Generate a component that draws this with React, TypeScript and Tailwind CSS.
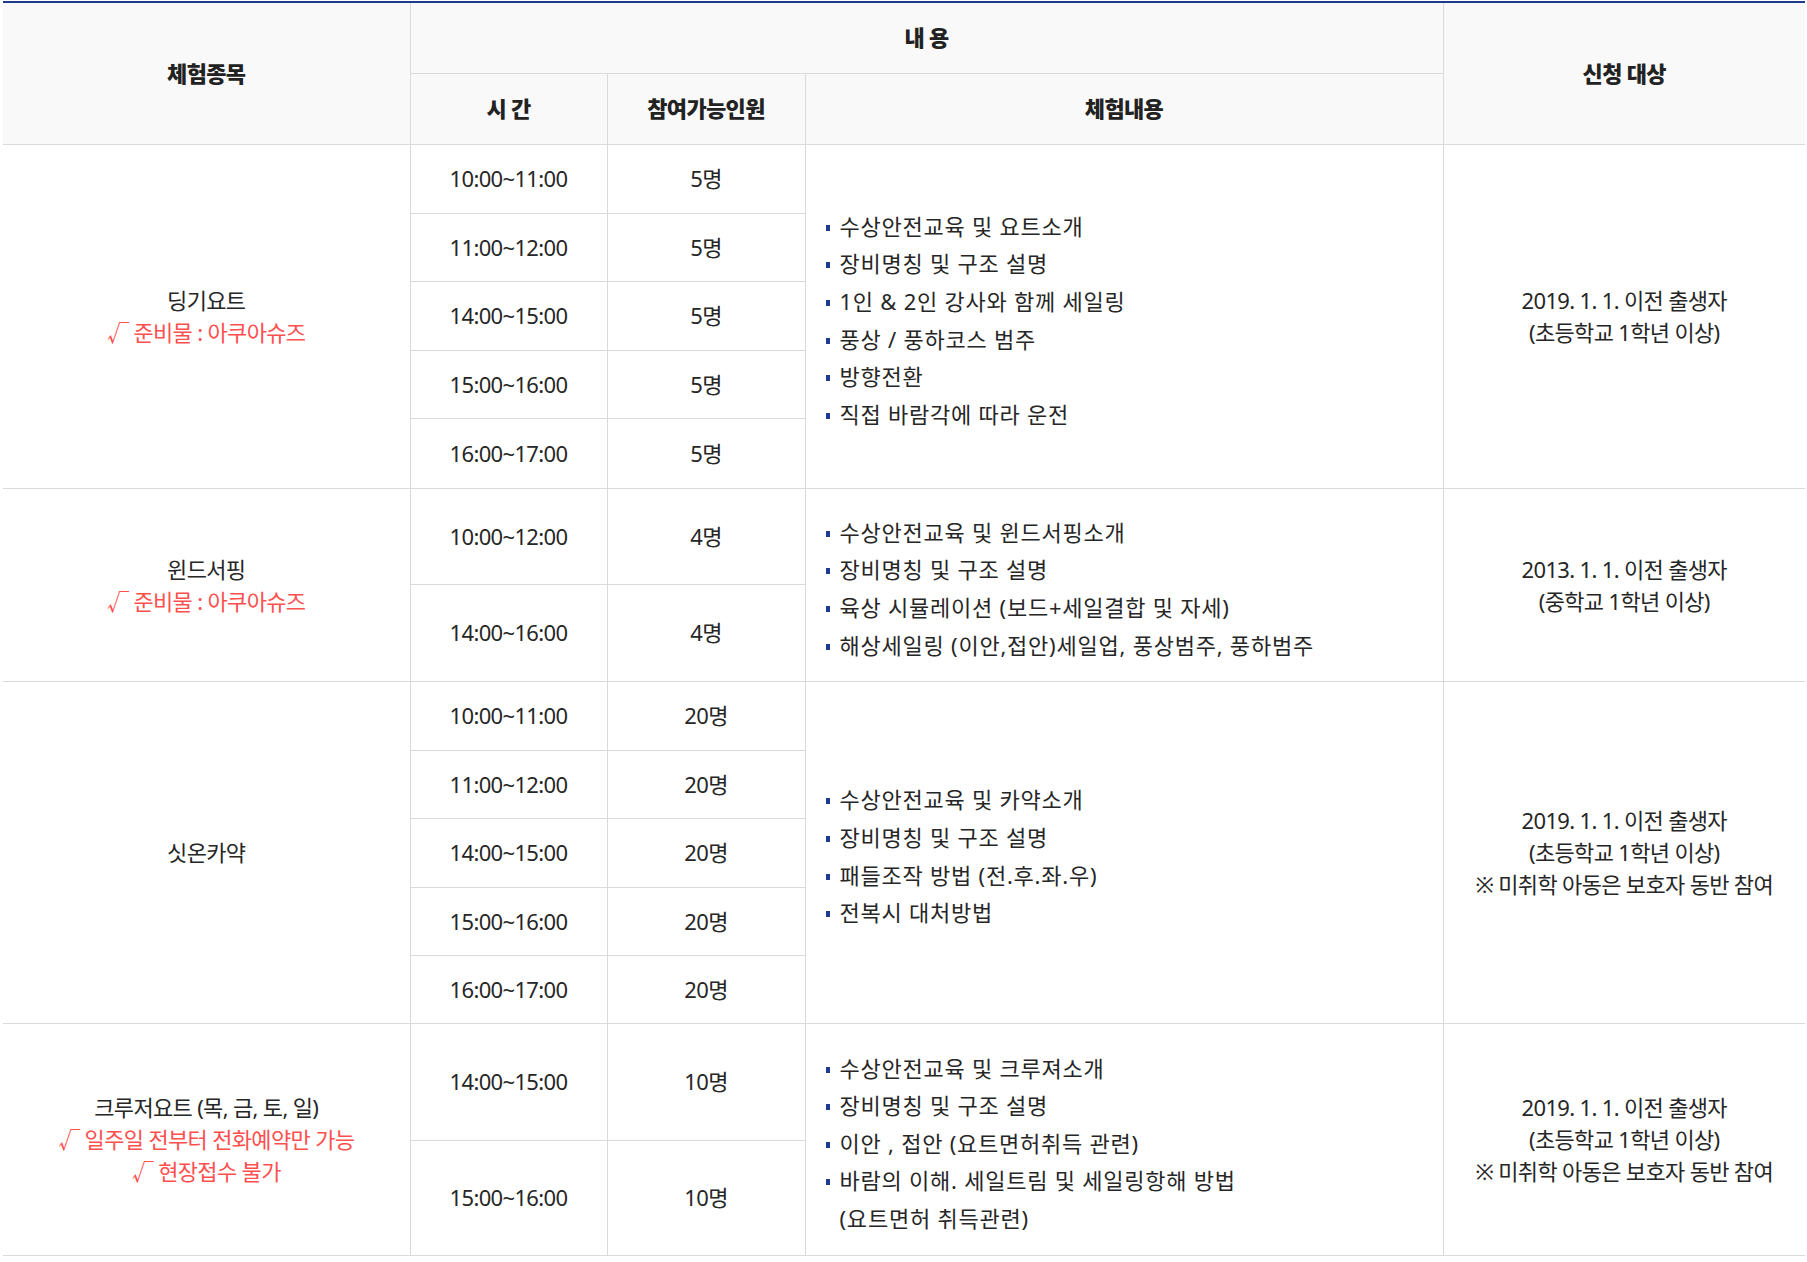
import React from "react";

type Slot = { time: string; count: string; h: string };
type Group = {
  name: string;
  notes: string[];
  slots: Slot[];
  content: string[][];
  target: string[];
};

const groups: Group[] = [
  {
    name: "딩기요트",
    notes: ["√ 준비물 : 아쿠아슈즈"],
    slots: [
      { time: "10:00~11:00", count: "5명", h: "h-[69px]" },
      { time: "11:00~12:00", count: "5명", h: "h-[68px]" },
      { time: "14:00~15:00", count: "5명", h: "h-[69px]" },
      { time: "15:00~16:00", count: "5명", h: "h-[68px]" },
      { time: "16:00~17:00", count: "5명", h: "h-[70px]" },
    ],
    content: [
      ["수상안전교육 및 요트소개"],
      ["장비명칭 및 구조 설명"],
      ["1인 & 2인 강사와 함께 세일링"],
      ["풍상 / 풍하코스 범주"],
      ["방향전환"],
      ["직접 바람각에 따라 운전"],
    ],
    target: ["2019. 1. 1. 이전 출생자", "(초등학교 1학년 이상)"],
  },
  {
    name: "윈드서핑",
    notes: ["√ 준비물 : 아쿠아슈즈"],
    slots: [
      { time: "10:00~12:00", count: "4명", h: "h-[96px]" },
      { time: "14:00~16:00", count: "4명", h: "h-[97px]" },
    ],
    content: [
      ["수상안전교육 및 윈드서핑소개"],
      ["장비명칭 및 구조 설명"],
      ["육상 시뮬레이션 (보드+세일결합 및 자세)"],
      ["해상세일링 (이안,접안)세일업, 풍상범주, 풍하범주"],
    ],
    target: ["2013. 1. 1. 이전 출생자", "(중학교 1학년 이상)"],
  },
  {
    name: "싯온카약",
    notes: [],
    slots: [
      { time: "10:00~11:00", count: "20명", h: "h-[69px]" },
      { time: "11:00~12:00", count: "20명", h: "h-[68px]" },
      { time: "14:00~15:00", count: "20명", h: "h-[69px]" },
      { time: "15:00~16:00", count: "20명", h: "h-[68px]" },
      { time: "16:00~17:00", count: "20명", h: "h-[68px]" },
    ],
    content: [
      ["수상안전교육 및 카약소개"],
      ["장비명칭 및 구조 설명"],
      ["패들조작 방법 (전.후.좌.우)"],
      ["전복시 대처방법"],
    ],
    target: [
      "2019. 1. 1. 이전 출생자",
      "(초등학교 1학년 이상)",
      "※ 미취학 아동은 보호자 동반 참여",
    ],
  },
  {
    name: "크루저요트 (목, 금, 토, 일)",
    notes: ["√ 일주일 전부터 전화예약만 가능", "√ 현장접수 불가"],
    slots: [
      { time: "14:00~15:00", count: "10명", h: "h-[117px]" },
      { time: "15:00~16:00", count: "10명", h: "h-[115px]" },
    ],
    content: [
      ["수상안전교육 및 크루져소개"],
      ["장비명칭 및 구조 설명"],
      ["이안 , 접안 (요트면허취득 관련)"],
      ["바람의 이해. 세일트림 및 세일링항해 방법", "(요트면허 취득관련)"],
    ],
    target: [
      "2019. 1. 1. 이전 출생자",
      "(초등학교 1학년 이상)",
      "※ 미취학 아동은 보호자 동반 참여",
    ],
  },
];

function ContentList({ items }: { items: string[][] }) {
  return (
    <ul className="flex flex-col pl-[20px] pt-[9px] text-left tracking-[0.035em]">
      {items.map((lines, i) => (
        <li key={i} className="flex items-start">
          <span className="mt-[17px] mr-[10px] h-[6px] w-[4px] shrink-0 bg-[#1d3b8f]" />
          <span className="leading-[37.6px]">
            {lines.map((l, j) => (
              <span key={j} className="block">
                {l}
              </span>
            ))}
          </span>
        </li>
      ))}
    </ul>
  );
}

export default function App() {
  const td = "border border-[#dadada] text-center align-middle";
  const th = "border border-[#dadada] bg-[#f9f9f9] text-center align-middle font-black text-[#222]";

  return (
    <main className="min-h-screen bg-white pt-[1px] font-['Noto_Sans','Noto_Sans_CJK_KR',sans-serif] text-[22px] tracking-[-0.03em] text-[#262626]">
      <table className="ml-[3px] w-[1802px] table-fixed border-collapse border-t-2 border-t-[#1e3a8a] border-x-0">
        <colgroup>
          <col className="w-[407px]" />
          <col className="w-[197px]" />
          <col className="w-[198px]" />
          <col className="w-[638px]" />
          <col className="w-[362px]" />
        </colgroup>
        <thead>
          <tr className="h-[71px]">
            <th rowSpan={2} className={`${th} border-l-0 border-t-0`}>
              체험종목
            </th>
            <th colSpan={3} className={`${th} border-t-0`}>
              내 용
            </th>
            <th rowSpan={2} className={`${th} border-r-0 border-t-0`}>
              신청 대상
            </th>
          </tr>
          <tr className="h-[71px]">
            <th className={th}>시 간</th>
            <th className={th}>참여가능인원</th>
            <th className={th}>체험내용</th>
          </tr>
        </thead>
        <tbody>
          {groups.map((g) =>
            g.slots.map((s, i) => (
              <tr key={g.name + i} className={s.h}>
                {i === 0 && (
                  <td rowSpan={g.slots.length} className={`${td} border-l-0 leading-[32px]`}>
                    <div>{g.name}</div>
                    {g.notes.map((n) => (
                      <div key={n} className="text-[#ff4f4f]">
                        {n}
                      </div>
                    ))}
                  </td>
                )}
                <td className={td}>{s.time}</td>
                <td className={td}>{s.count}</td>
                {i === 0 && (
                  <td rowSpan={g.slots.length} className={`${td} text-left`}>
                    <ContentList items={g.content} />
                  </td>
                )}
                {i === 0 && (
                  <td rowSpan={g.slots.length} className={`${td} border-r-0 leading-[32px]`}>
                    {g.target.map((t) => (
                      <div key={t}>{t}</div>
                    ))}
                  </td>
                )}
              </tr>
            ))
          )}
        </tbody>
      </table>
    </main>
  );
}
